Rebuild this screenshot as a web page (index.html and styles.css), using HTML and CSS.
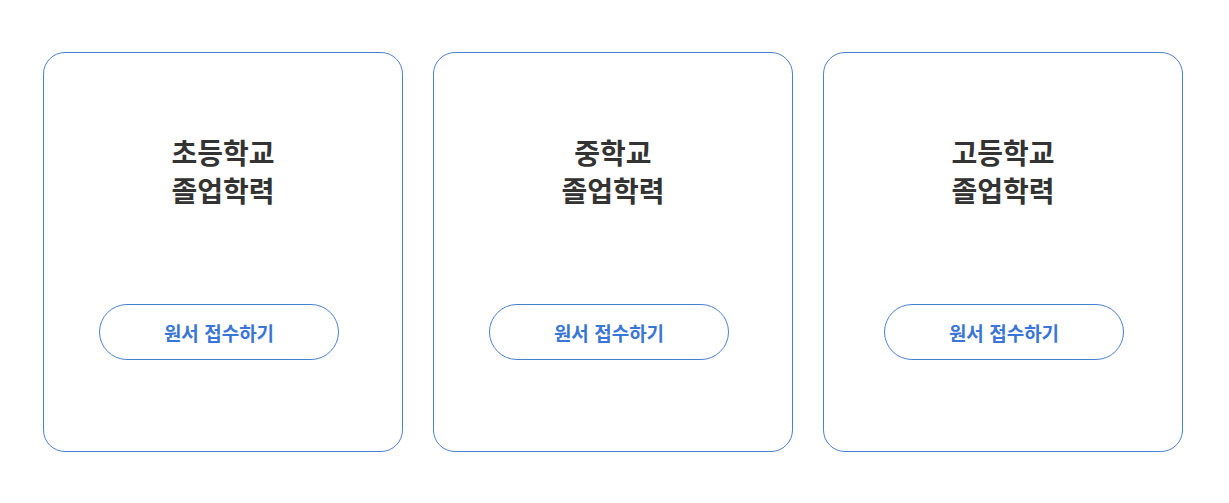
FILE: index.html
```html
<!DOCTYPE html>
<html lang="ko">
<head>
  <meta charset="utf-8">
  <title>졸업학력 원서 접수</title>
  <link rel="stylesheet" href="styles.css">
</head>
<body>
  <div class="card-list">
    <div class="card">
      <h2 class="card-title">초등학교<br>졸업학력</h2>
      <button class="apply-btn">원서 접수하기</button>
    </div>
    <div class="card">
      <h2 class="card-title">중학교<br>졸업학력</h2>
      <button class="apply-btn">원서 접수하기</button>
    </div>
    <div class="card">
      <h2 class="card-title">고등학교<br>졸업학력</h2>
      <button class="apply-btn">원서 접수하기</button>
    </div>
  </div>
</body>
</html>
```

FILE: styles.css
```css
body {
  margin: 0;
  background: #fff;
  font-family: "Noto Sans CJK KR", "Noto Sans", sans-serif;
}
.card-list {
  display: flex;
  gap: 30px;
  padding: 52px 43px;
}
.card {
  box-sizing: border-box;
  width: 360px;
  height: 400px;
  border: 1px solid #4a80d4;
  border-radius: 22px;
  display: flex;
  flex-direction: column;
  align-items: center;
  padding-top: 80px;
}
.card-title {
  margin: 0;
  font-size: 28px;
  line-height: 38px;
  font-weight: 700;
  color: #333;
  text-align: center;
}
.apply-btn {
  margin-top: 95px;
  margin-right: 8px;
  width: 240px;
  height: 56px;
  border: 1px solid #4a80d4;
  border-radius: 28px;
  background: #fff;
  color: #3a76d8;
  font-family: inherit;
  font-size: 19px;
  font-weight: 700;
  cursor: pointer;
}
.card:last-child .apply-btn {
  margin-right: 0;
  margin-left: 2px;
}
```
